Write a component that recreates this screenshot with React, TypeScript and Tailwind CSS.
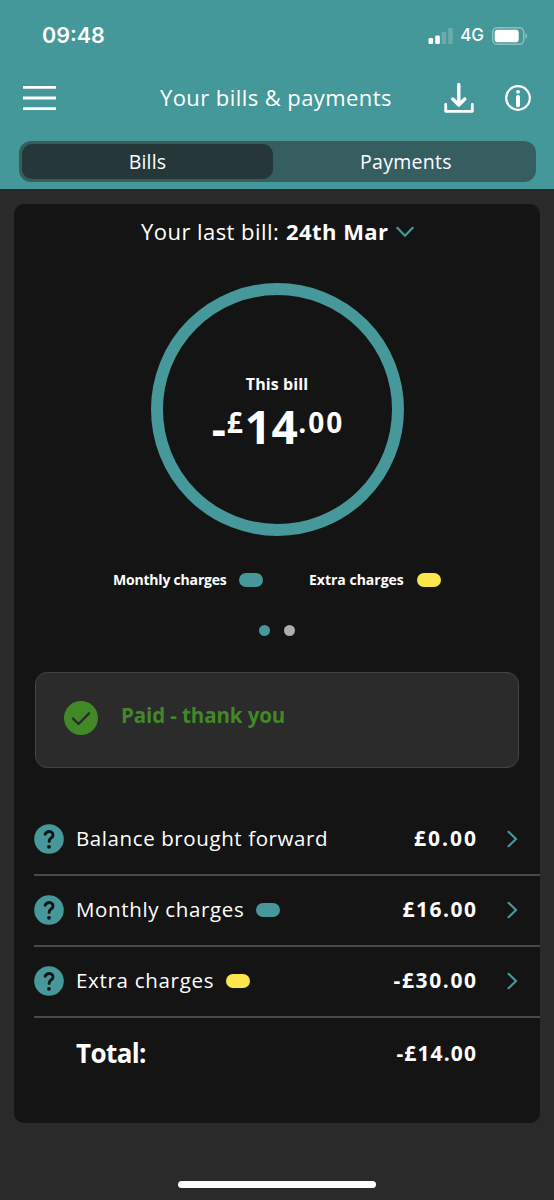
import { clsx } from "clsx";

const rows = [
  { label: "Balance brought forward", amount: "£0.00", pill: "", tracking: "tracking-[0.6px]", amountTracking: "tracking-[2px] -mr-[2px]" },
  { label: "Monthly charges", amount: "£16.00", pill: "bg-[#46989a]", tracking: "tracking-[0.65px]", amountTracking: "tracking-[1.5px] -mr-[1.5px]" },
  { label: "Extra charges", amount: "-£30.00", pill: "bg-[#fbe74b]", tracking: "tracking-[0.7px]", amountTracking: "tracking-[1.6px] -mr-[1.6px]" },
];

function StatusBar() {
  return (
    <div className="flex h-[70px] items-center justify-between pl-[42px] pr-[26px] pt-px font-['Inter',sans-serif]">
      <span className="text-[21.5px] font-semibold leading-none">09:48</span>
      <div className="flex items-center">
        <svg width="25" height="18" viewBox="0 0 25 18" fill="#fff">
          <rect x="0.5" y="11" width="4.6" height="6" rx="1.2" />
          <rect x="7.2" y="8.5" width="4.6" height="8.5" rx="1.2" />
          <rect x="13.6" y="5" width="4.6" height="12" rx="1.2" opacity="0.2" />
          <rect x="20.2" y="1" width="4.6" height="16" rx="1.2" opacity="0.2" />
        </svg>
        <span className="ml-[7px] text-[17px] font-medium leading-none">4G</span>
        <svg className="ml-2" width="36" height="18" viewBox="0 0 36 18">
          <rect x="0.7" y="0.7" width="31" height="16.6" rx="4.6" fill="none" stroke="#fff" strokeOpacity="0.4" strokeWidth="1.4" />
          <rect x="2.7" y="2.8" width="24" height="12.4" rx="2.6" fill="#fff" />
          <path d="M33.4 6.2c2 .8 2 4.8 0 5.6z" fill="#fff" fillOpacity="0.45" />
        </svg>
      </div>
    </div>
  );
}

function HelpIcon() {
  return (
    <svg width="30" height="30" viewBox="0 0 30 30">
      <circle cx="15" cy="15" r="14.8" fill="#46989a" />
      <path d="M11.2 10.2C12.2 8 14 7.4 15.6 7.5C18.2 7.700 19.600 10 18.800 12.100C17.900 14.200 15.100 14.300 15.100 17.500" fill="none" stroke="#141414" strokeWidth="2.9" strokeLinecap="round" strokeLinejoin="round" />
      <circle cx="15" cy="22.8" r="1.9" fill="#141414" />
    </svg>
  );
}

export default function App() {
  return (
    <div className="flex h-[1200px] w-[554px] flex-col bg-[#2a2a2a] font-['Open_Sans',sans-serif] text-white">
      {/* HEADER */}
      <header className="h-[189px] bg-[#459899]">
        <StatusBar />
        <div className="flex h-[56px] items-center pl-[23px] pr-[22px]">
          <svg width="33" height="26" viewBox="0 0 33 26" stroke="#fff" strokeWidth="2.8">
            <path d="M0 2.300h33M0 13h33M0 23.700h33" />
          </svg>
          <h1 className="ml-[104px] w-[283px] whitespace-nowrap pb-[2px] text-[22px] tracking-[0.42px]">
            Your bills &amp; payments
          </h1>
          <svg width="32" height="32" viewBox="0 0 32 32" fill="none" stroke="#fff" strokeLinecap="round" strokeLinejoin="round">
            <path d="M15.800 2.500V22M9.800 17L15.800 23L21.800 17" strokeWidth="3.4" />
            <path d="M2.700 22.500V29.300H29.300V22.500" strokeWidth="2.8" />
          </svg>
          <svg className="ml-[30px]" width="26" height="26" viewBox="0 0 26 26">
            <circle cx="13" cy="13" r="11.8" fill="none" stroke="#fff" strokeWidth="2.2" />
            <circle cx="13" cy="6.800" r="1.9" fill="#fff" />
            <path d="M13 12V20.300" stroke="#fff" strokeWidth="4" strokeLinecap="round" />
          </svg>
        </div>
        <div className="ml-[19px] mt-[15px] flex h-[41px] w-[517px] rounded-xl bg-[#365e61] p-[3px] text-[19.5px]">
          <div className="flex w-[251px] items-center justify-center rounded-[10px] bg-[#253739] tracking-[0.2px]">Bills</div>
          <div className="flex flex-1 items-center justify-center pl-[6px] tracking-[0.3px]">Payments</div>
        </div>
      </header>

      {/* BILL CARD */}
      <main className="ml-[14px] mt-[15px] h-[919px] w-[526px] rounded-[10px] bg-[#141414]">
        <div className="flex h-[55px] items-center whitespace-nowrap pl-[127px] text-[22px]">
          <span className="w-[145px] tracking-[0.45px]">Your last bill:</span>
          <span className="w-[110px] font-bold tracking-[0.45px]">24th Mar</span>
          <svg width="18" height="12" viewBox="0 0 18 12" fill="none" stroke="#46989a" strokeWidth="2.2" strokeLinecap="round" strokeLinejoin="round">
            <path d="M1.300 1.800L9 9.800L16.700 1.800" />
          </svg>
        </div>

        <div className="mx-auto mt-6 flex size-[253px] flex-col items-center rounded-full border-[12px] border-[#46989a] pt-[77px]">
          <p className="text-[16px] font-bold leading-6 tracking-[0.1px]">This bill</p>
          <div className="mt-[11px] flex h-[50px] items-start whitespace-nowrap font-bold">
            <span className="w-[15px] text-[44px] leading-[42px]">-</span>
            <span className="mr-[2px] text-[28px] leading-[30px]">£</span>
            <span className="text-[46px] leading-[38px] tracking-[0.5px]">14</span>
            <span className="-mr-[2px] text-[28px] font-bold leading-[30px] tracking-[2px]">.00</span>
          </div>
        </div>

        <div className="mt-8 flex h-6 items-center whitespace-nowrap pl-[99px] text-[14px] font-bold">
          <span className="w-[126px] pb-[2px] tracking-[-0.2px]">Monthly charges</span>
          <span className="h-[14px] w-6 rounded-full bg-[#46989a]" />
          <span className="ml-[46px] w-[108px] pb-[2px]">Extra charges</span>
          <span className="h-[14px] w-6 rounded-full bg-[#fbe74b]" />
        </div>

        <div className="mt-[33px] flex justify-center gap-[14px]">
          <span className="size-[11px] rounded-full bg-[#46989a]" />
          <span className="size-[11px] rounded-full bg-[#adadad]" />
        </div>

        <div className="ml-[21px] mt-[36px] flex h-24 w-[484px] items-start rounded-xl border border-[#434343] bg-[#2b2b2b] pl-7">
          <svg className="mt-[28px]" width="34" height="34" viewBox="0 0 34 34">
            <circle cx="17" cy="17" r="17" fill="#418926" />
            <path d="M9 17.500L14.500 23L25 12.300" fill="none" stroke="#2b2b2b" strokeWidth="2.4" strokeLinecap="round" strokeLinejoin="round" />
          </svg>
          <p className="ml-[23px] mt-[27px] text-[20.5px] font-bold leading-[30px] tracking-[-0.1px] text-[#418926]">Paid - thank you</p>
        </div>

        {/* BREAKDOWN */}
        <div className="ml-5 mt-[37px]">
          {rows.map((row) => (
            <div key={row.label} className="flex h-[71px] items-center border-b-2 border-[#4a4a4a] pb-[2px] pr-[22px]">
              <HelpIcon />
              <span className={clsx("ml-3 whitespace-nowrap text-[20.5px]", row.tracking)}>{row.label}</span>
              {row.pill && <span className={clsx("ml-3 h-[14px] w-6 rounded-full", row.pill)} />}
              <span className="ml-auto whitespace-nowrap text-[21px] font-bold">
                <span className={row.amountTracking}>{row.amount}</span>
              </span>
              <svg className="ml-[31px]" width="11" height="18" viewBox="0 0 11 18" fill="none" stroke="#46989a" strokeWidth="2.2" strokeLinecap="round">
                <path d="M1.500 1.800L9 9L1.500 16.200" />
              </svg>
            </div>
          ))}
          <div className="flex h-[71px] items-center justify-between pl-[42px] pr-[63px] font-bold">
            <span className="text-[26px] tracking-[-0.6px]">Total:</span>
            <span className="text-[21px] tracking-[1.1px]">-£14.00</span>
          </div>
        </div>
      </main>

      <div className="mx-auto mb-3 mt-auto h-[7px] w-[198px] rounded-full bg-white" />
    </div>
  );
}
